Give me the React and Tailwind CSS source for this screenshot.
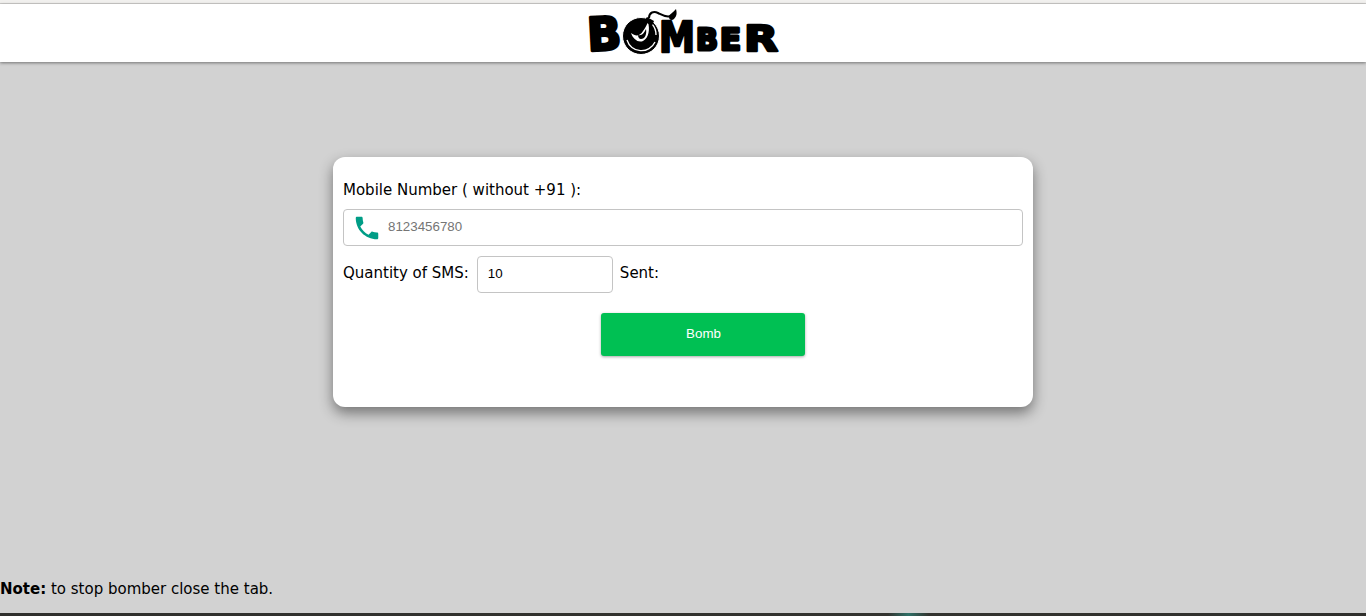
function Logo() {
  const face = { fontFamily: '"DejaVu Sans", sans-serif', fontWeight: 700 };
  const letter = (ch, x, y, size, width, rotate, stroke) => (
    <text
      x={x}
      y={y}
      fontSize={size}
      textLength={width}
      lengthAdjust="spacingAndGlyphs"
      stroke="#000"
      strokeWidth={stroke}
      strokeLinejoin="round"
      transform={rotate ? `rotate(${rotate} ${x} ${y})` : undefined}
      style={face}
    >
      {ch}
    </text>
  );
  return (
    <svg width="194" height="50" viewBox="587 8 194 50" className="block overflow-visible">
      {letter('B', 589, 51, 46, 34, -3, 3)}
      <circle cx="642" cy="36" r="18.5" fill="#000" stroke="#fff" strokeWidth="1" />
      <path d="M628 40 A15 15 0 0 0 656 42" fill="none" stroke="#fff" strokeWidth="1.3" />
      <path d="M653 24 A16 16 0 0 1 657 35" fill="none" stroke="#fff" strokeWidth="1.3" />
      <path d="M632 33 C637 37 641 36 644 31 C647 27 648 24 649 22 C651 29 650 38 644 41 C639 43 634 39 632 33 Z" fill="#fff" />
      <path d="M639 35 C643 36 645 33 647 29 C648 34 646 39 642 39 C640 39 639 37 639 35 Z" fill="#000" />
      <path d="M648 17 L655 21 L653 26 L645 21 Z" fill="#000" />
      <path d="M650 18 C650 12 655 11 659 13 C663 15 667 18 672 16" fill="none" stroke="#000" strokeWidth="2" />
      <path d="M670 17 C670 14 674 13 677 9 C678 13 678 16 675 19 C673 21 670 20 670 17 Z" fill="#000" />
      {letter('M', 660, 52, 43, 36, 0, 2.5)}
      {letter('B', 697, 50, 30, 22, 0, 3)}
      {letter('E', 721, 50, 30, 21, 0, 3)}
      {letter('R', 745, 51, 36, 34, 0, 2.5)}
    </svg>
  );
}

export default function App() {
  return (
    <div className='h-[616px] flex flex-col bg-[#d2d2d2] font-["DejaVu_Sans",sans-serif] text-black overflow-hidden'>
      <div className="h-[4px] bg-[#f1f0ee] border-b border-[#cfcecc]" />
      <header className="h-[58px] bg-white flex justify-center items-start shadow-[0_1px_3px_rgba(0,0,0,0.45)] pt-[4px]">
        <Logo />
      </header>

      <main className="flex justify-center mt-[95px]">
        <div className="w-[700px] h-[250px] bg-white rounded-[12px] shadow-[0_6px_14px_rgba(0,0,0,0.45)] px-[10px] pt-[24px]">
          <label className="block text-[15px] leading-[19px]">Mobile Number ( without +91 ):</label>
          <div className="mt-[9px] h-[37px] border border-[#c4c4c4] rounded-[4px] flex items-center pl-[8px]">
            <svg width="30" height="30" viewBox="0 0 24 24" fill="#009d86" className="shrink-0">
              <path d="M6.62 10.79c1.44 2.83 3.76 5.14 6.59 6.59l2.2-2.2c.27-.27.67-.36 1.02-.24 1.12.37 2.33.57 3.57.57.55 0 1 .45 1 1V20c0 .55-.45 1-1 1-9.39 0-17-7.61-17-17 0-.55.45-1 1-1h3.5c.55 0 1 .45 1 1 0 1.25.2 2.45.57 3.57.11.35.03.74-.25 1.02l-2.2 2.2z" />
            </svg>
            <input
              type="text"
              placeholder="8123456780"
              className='ml-[6px] mb-[2px] flex-1 outline-none font-["Liberation_Sans",sans-serif] text-[13.33px] placeholder:text-[#757575]'
            />
          </div>
          <div className="mt-[10px] flex items-center text-[15px]">
            <span className="mb-[3px]">Quantity of SMS:</span>
            <input
              type="text"
              defaultValue="10"
              className='ml-[8px] w-[136px] h-[37px] border border-[#c4c4c4] rounded-[4px] px-[10px] pb-[2px] outline-none font-["Liberation_Sans",sans-serif] text-[13.33px]'
            />
            <span className="ml-[7px] mb-[3px]">Sent:</span>
          </div>
          <div className="mt-[20px] flex justify-center pl-[40px]">
            <button className='w-[204px] h-[43px] bg-[#00c053] text-white rounded-[3px] shadow-[0_1px_3px_rgba(0,0,0,0.35)] font-["Liberation_Sans",sans-serif] text-[13.33px] pl-[1px] pb-[2px]'>
              Bomb
            </button>
          </div>
        </div>
      </main>

      <p className="mt-auto mb-[14px] text-[15px] leading-[20px]">
        <b>Note:</b> to stop bomber close the tab.
      </p>
      <div className="h-[3px] bg-[linear-gradient(90deg,#2f2f2c_0%,#33332f_65%,#2e6f66_66.5%,#33332f_68%,#2f2f2c_100%)]" />
    </div>
  );
}
